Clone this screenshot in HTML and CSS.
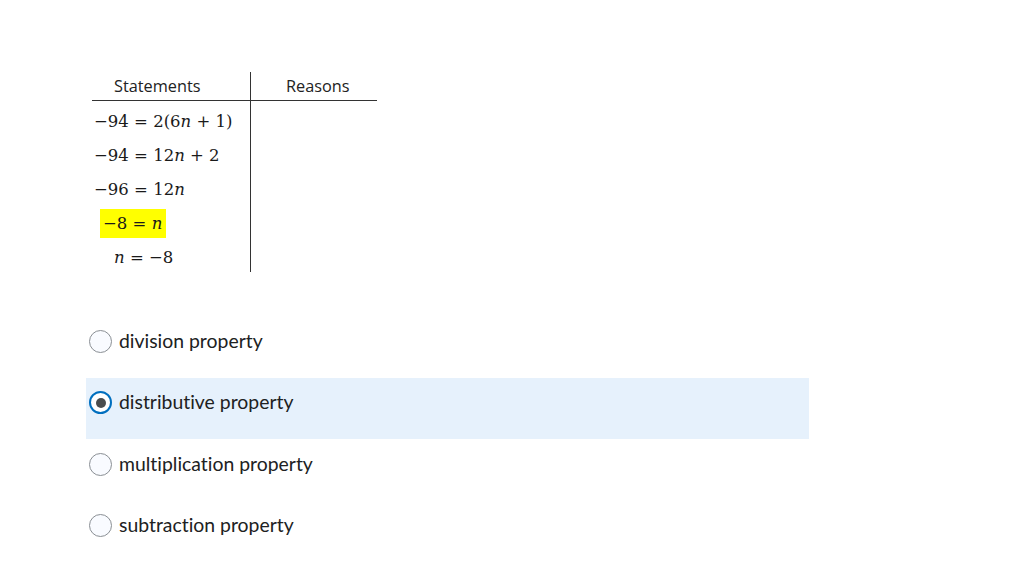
FILE: index.html
```html
<!DOCTYPE html>
<html>
<head>
<meta charset="utf-8">
<link rel="stylesheet" href="styles.css">
</head>
<body>
<div class="page">
  <div class="proof">
    <div class="col col-statements">
      <div class="head">Statements</div>
      <div class="row"><span class="math">−94 = 2(6<i>n</i> + 1)</span></div>
      <div class="row"><span class="math">−94 = 12<i>n</i> + 2</span></div>
      <div class="row"><span class="math">−96 = 12<i>n</i></span></div>
      <div class="row"><span class="math hl">−8 = <i>n</i></span></div>
      <div class="row"><span class="math last"><i>n</i> = −8</span></div>
    </div>
    <div class="col col-reasons">
      <div class="head">Reasons</div>
    </div>
  </div>

  <ul class="options">
    <li class="option"><span class="radio"></span><span class="label">division property</span></li>
    <li class="option selected"><span class="radio checked"></span><span class="label">distributive property</span></li>
    <li class="option"><span class="radio"></span><span class="label">multiplication property</span></li>
    <li class="option"><span class="radio"></span><span class="label">subtraction property</span></li>
  </ul>
</div>
</body>
</html>
```

FILE: styles.css
```css
html, body {
  margin: 0;
  padding: 0;
  background: #ffffff;
}

.page {
  padding-top: 72px;
  font-family: "Lato", "Open Sans", sans-serif;
  color: #202122;
}

.proof {
  display: flex;
  margin-left: 92px;
  width: 285px;
  height: 200px;
}

.col-statements {
  width: 158px;
  border-right: 1px solid #333;
}

.col-reasons {
  flex: 1;
}

.head {
  height: 29px;
  border-bottom: 1px solid #333;
  font-family: "Open Sans", "Liberation Sans", sans-serif;
  font-size: 16.3px;
  color: #222;
  display: flex;
  align-items: center;
  box-sizing: border-box;
  padding-top: 0;
}

.col-statements .head {
  padding-left: 22px;
}

.col-reasons .head {
  padding-left: 35px;
}

.row {
  height: 34px;
  display: flex;
  align-items: center;
  padding-left: 2px;
}

.col-statements .head + .row {
  margin-top: 3px;
}

.math {
  font-family: "DejaVu Serif", "Liberation Serif", serif;
  font-size: 16.5px;
  color: #1a1a1a;
  white-space: pre;
}

.math i {
  font-style: italic;
}

.hl {
  background: #ffff00;
  padding: 5px 4px 5px 3px;
  margin-left: 6px;
}

.last {
  margin-left: 20px;
}

.options {
  list-style: none;
  margin: 45px 0 0 86px;
  padding: 0;
  width: 723px;
}

.option {
  height: 61px;
  display: flex;
  align-items: flex-start;
  padding-top: 12px;
  padding-left: 3px;
  box-sizing: border-box;
}

.option.selected {
  background: #e6f1fc;
  margin-bottom: 1px;
}

.radio {
  width: 23px;
  height: 23px;
  border: 1px solid #8a8f94;
  border-radius: 50%;
  background: #f9fbff;
  box-sizing: border-box;
  flex: none;
  position: relative;
  margin-top: 1px;
}

.radio.checked {
  border: 2px solid #006fbf;
  background: #ffffff;
}

.radio.checked::after {
  content: "";
  position: absolute;
  left: 4.5px;
  top: 4.5px;
  width: 10px;
  height: 10px;
  border-radius: 50%;
  background: #494c4e;
}

.label {
  margin-left: 7px;
  font-size: 19.4px;
  line-height: 24px;
  font-variant-ligatures: none;
}
```
